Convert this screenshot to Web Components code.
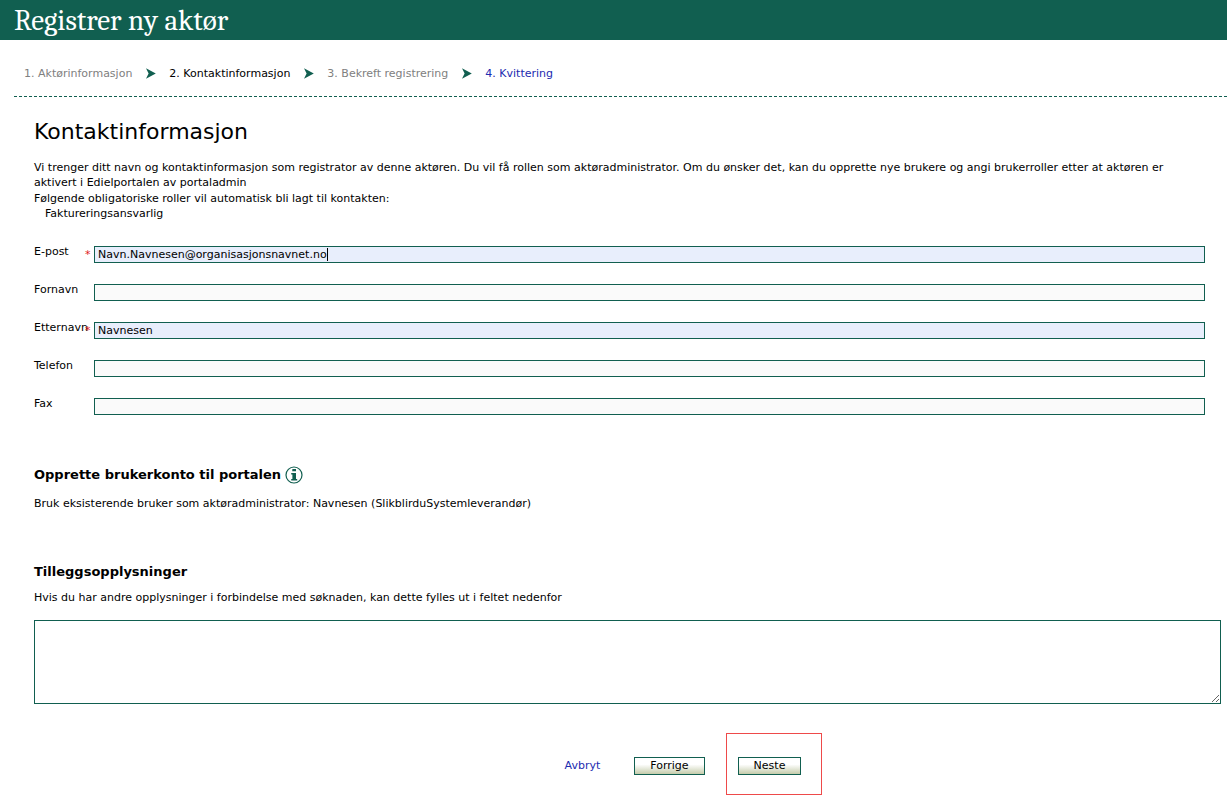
<!DOCTYPE html>
<html lang="no">
<head>
<meta charset="utf-8">
<title>Registrer ny aktør</title>
<style>
  html { background: #fff; }
  body { margin: 0; font: 11px/15px "DejaVu Sans", Verdana, sans-serif; color: #000; }
</style>
</head>
<body>
<registration-page></registration-page>
<script>
class BaseElement extends HTMLElement {
  render(markup) {
    this.attachShadow({ mode: "open" }).innerHTML = markup;
  }
}

customElements.define("page-banner", class extends BaseElement {
  connectedCallback() {
    this.render(`
      <style>
        :host { display: block; background: #115f50; padding: 0 14px; height: 40px; }
        h1 { margin: 0; padding-top: 2px; font: 29px/38px Cambria, Caladea, "Liberation Serif", serif; color: #fff; }
      </style>
      <h1><slot></slot></h1>`);
  }
});

customElements.define("wizard-steps", class extends BaseElement {
  connectedCallback() {
    this.render(`
      <style>
        :host { display: block; margin-left: 14px; padding: 26px 10px 15px; border-bottom: 1px dashed #115f50; }
        nav { display: flex; align-items: center; }
      </style>
      <nav aria-label="Steg"><slot></slot></nav>`);
  }
});

customElements.define("wizard-step", class extends BaseElement {
  connectedCallback() {
    const text = this.getAttribute("label");
    const state = this.getAttribute("state");
    const label = state === "link" ? `<a href="#kvittering">${text}</a>` : `<span>${text}</span>`;
    this.render(`
      <style>
        :host { display: flex; align-items: center; color: #808080; }
        :host([state="current"]) { color: #000; }
        a { color: #1d2bb0; text-decoration: none; }
        svg { margin: 0 13px 0 14px; }
        :host(:last-of-type) svg { display: none; }
      </style>
      ${label}
      <svg width="10" height="11" viewBox="0 0 10 11" aria-hidden="true"><path d="M0 .2 9.8 5.5 0 10.8 2.6 5.5Z" fill="#115f50"/></svg>`);
  }
});

customElements.define("form-field", class extends BaseElement {
  connectedCallback() {
    const mark = this.hasAttribute("required") ? `<span class="mark" aria-hidden="true">*</span>` : "";
    this.render(`
      <style>
        :host { display: grid; grid-template-columns: 60px 1fr; align-items: start; height: 17px; }
        .head { display: flex; justify-content: space-between; }
        label { line-height: 12px; width: 51px; white-space: nowrap; }
        .mark { width: 9px; color: #e01b1b; line-height: 18px; }
        .box { position: relative; }
        input { display: block; box-sizing: border-box; width: 100%; height: 17px; margin: 0; padding: 0 3px; border: 1px solid #115f50;
                border-radius: 0; outline: none; background: #fafafa; color: #000; font: inherit; caret-color: transparent; }
        :host([value]) input { background: #e8eefc; }
        .caret { position: absolute; top: 2px; width: 1px; height: 13px; background: #000; }
      </style>
      <div class="head"><label for="field">${this.getAttribute("label")}</label>${mark}</div>
      <div class="box"><input id="field" type="${this.getAttribute("type") || "text"}" value="${this.getAttribute("value") || ""}"></div>`);
    if (this.hasAttribute("active")) this.showCaret();
  }
  // Steady caret placed after the last character of the value.
  showCaret() {
    const input = this.shadowRoot.getElementById("field");
    const context = document.createElement("canvas").getContext("2d");
    const style = getComputedStyle(input);
    context.font = `${style.fontSize} ${style.fontFamily}`;
    const caret = document.createElement("span");
    caret.className = "caret";
    caret.style.left = `${Math.round(context.measureText(input.value).width) + 4}px`;
    input.after(caret);
    input.addEventListener("input", () => {
      caret.remove();
      input.style.caretColor = "auto";
    }, { once: true });
  }
});

customElements.define("info-button", class extends BaseElement {
  connectedCallback() {
    this.render(`
      <style>
        :host { display: inline-flex; }
        button { display: flex; padding: 0; border: 0; background: none; cursor: pointer; }
      </style>
      <button type="button" aria-label="Informasjon">
        <svg width="18" height="18" viewBox="0 0 18 18"><circle cx="9" cy="9" r="8" fill="#fff" stroke="#115f50" stroke-width="1.2"/>
          <path d="M7.4 3H11V5.2H7.2ZM6.2 7H11V13H12.2V14.6H6.2V13H7.4V8.6H6.2Z" fill="#115f50"/></svg>
      </button>`);
  }
});

customElements.define("form-button", class extends BaseElement {
  connectedCallback() {
    this.render(`
      <style>
        :host { display: block; }
        button { display: block; box-sizing: border-box; height: 18px; margin: 0; padding: 0 15px; border: 1px solid #115f50;
                 border-radius: 0; background: linear-gradient(#fff 0%, #fff 40%, #c5ccab 100%); color: #000; font: inherit; line-height: 16px; }
      </style>
      <button type="button"><slot></slot></button>`);
  }
});

customElements.define("highlight-frame", class extends BaseElement {
  connectedCallback() {
    this.render(`
      <style>:host { display: block; padding: 23px 20px 19px 11px; border: 1px solid #ee4a4a; }</style>
      <slot></slot>`);
  }
});

customElements.define("registration-page", class extends BaseElement {
  connectedCallback() {
    this.render(`
      <style>
        :host { display: block; }
        main { padding-left: 34px; }
        h2 { margin: 0; padding-top: 21px; font-size: 22px; line-height: 28px; font-weight: normal; }
        h3 { display: flex; align-items: center; gap: 4px; margin: 0; font-size: 13px; line-height: 18px; }
        p { margin: 0; }
        .intro { padding: 14px 40px 0 0; }
        .intro p + p { margin-top: 1px; }
        .intro ul { margin: 0; padding-left: 11px; list-style: none; }
        .fields { display: grid; gap: 21px; margin: 25px 22px 0 0; }
        .account { margin-top: 51px; }
        .account p { margin-top: 12px; }
        .extra { margin: 52px 6px 0 0; }
        .extra p { margin: 9px 0 15px; }
        textarea { display: block; box-sizing: border-box; width: 100%; height: 84px; margin: 0; padding: 2px; border: 1px solid #115f50;
                   border-radius: 0; outline: none; background: #fff; font: inherit; resize: both; }
        .actions { display: flex; justify-content: center; align-items: baseline; margin-top: 29px; padding-left: 126px; }
        .actions a { margin-right: 34px; color: #1d2bb0; text-decoration: none; }
        highlight-frame { margin-left: 21px; }
      </style>
      <page-banner>Registrer ny aktør</page-banner>
      <wizard-steps>
        <wizard-step label="1. Aktørinformasjon"></wizard-step>
        <wizard-step label="2. Kontaktinformasjon" state="current"></wizard-step>
        <wizard-step label="3. Bekreft registrering"></wizard-step>
        <wizard-step label="4. Kvittering" state="link"></wizard-step>
      </wizard-steps>
      <main>
        <h2>Kontaktinformasjon</h2>
        <div class="intro">
          <p>Vi trenger ditt navn og kontaktinformasjon som registrator av denne aktøren. Du vil få rollen som aktøradministrator. Om du ønsker det, kan du opprette nye brukere og angi brukerroller etter at aktøren er aktivert i Edielportalen av portaladmin</p>
          <p>Følgende obligatoriske roller vil automatisk bli lagt til kontakten:</p>
          <ul><li>Faktureringsansvarlig</li></ul>
        </div>
        <div class="fields">
          <form-field label="E-post" value="Navn.Navnesen@organisasjonsnavnet.no" required active></form-field>
          <form-field label="Fornavn"></form-field>
          <form-field label="Etternavn" value="Navnesen" required></form-field>
          <form-field label="Telefon" type="tel"></form-field>
          <form-field label="Fax" type="tel"></form-field>
        </div>
        <section class="account">
          <h3>Opprette brukerkonto til portalen <info-button></info-button></h3>
          <p>Bruk eksisterende bruker som aktøradministrator: Navnesen (SlikblirduSystemleverandør)</p>
        </section>
        <section class="extra">
          <h3>Tilleggsopplysninger</h3>
          <p id="extra-hint">Hvis du har andre opplysninger i forbindelse med søknaden, kan dette fylles ut i feltet nedenfor</p>
          <textarea aria-labelledby="extra-hint"></textarea>
        </section>
        <div class="actions">
          <a href="#avbryt">Avbryt</a>
          <form-button>Forrige</form-button>
          <highlight-frame><form-button>Neste</form-button></highlight-frame>
        </div>
      </main>`);
  }
});
</script>
</body>
</html>
